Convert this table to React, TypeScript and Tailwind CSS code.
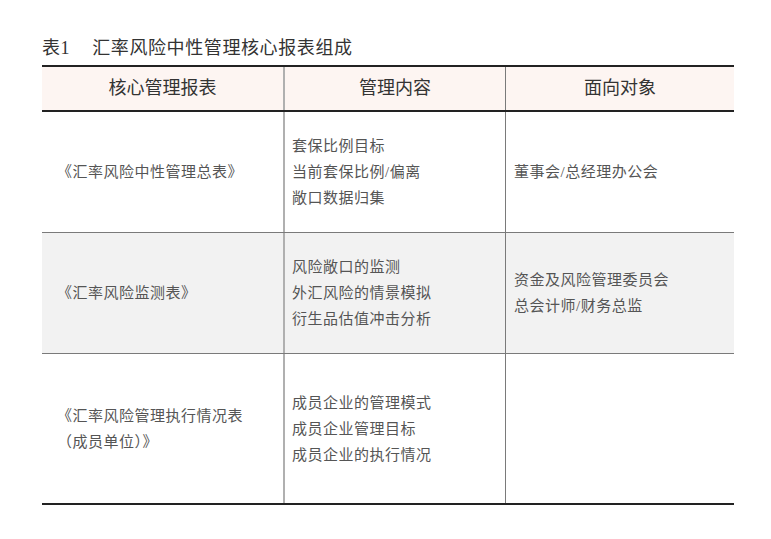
const font = { fontFamily: '"Liberation Serif", "Noto Sans CJK SC", serif' };

const rows = [
  {
    name: ['《汇率风险中性管理总表》'],
    content: ['套保比例目标', '当前套保比例/偏离', '敞口数据归集'],
    target: ['董事会/总经理办公会'],
    h: 'h-[120px]',
    bg: 'bg-white',
    border: 'border-b border-[#7a7a7a]',
  },
  {
    name: ['《汇率风险监测表》'],
    content: ['风险敞口的监测', '外汇风险的情景模拟', '衍生品估值冲击分析'],
    target: ['资金及风险管理委员会', '总会计师/财务总监'],
    h: 'h-[120px]',
    bg: 'bg-[#f2f2f2]',
    border: 'border-b border-[#7a7a7a]',
  },
  {
    name: ['《汇率风险管理执行情况表', '（成员单位）》'],
    content: ['成员企业的管理模式', '成员企业管理目标', '成员企业的执行情况'],
    target: [],
    h: 'h-[149px]',
    bg: 'bg-white',
    border: 'border-b-2 border-[#222]',
  },
];

function Lines({ lines }: { lines: string[] }) {
  return (
    <div className="flex flex-col">
      {lines.map((l) => (
        <div key={l} className="whitespace-nowrap">
          {l}
        </div>
      ))}
    </div>
  );
}

export default function App() {
  return (
    <div className="min-h-[539px] w-[771px] bg-white" style={font}>
      <div className="ml-[42px] w-[692px] pt-[35px]">
        <div className="text-[18px] leading-[26px] tracking-[0.6px] text-[#333]">
          表1<span className="inline-block w-[22px]" />汇率风险中性管理核心报表组成
        </div>

        <div className="mt-[4px] border-t-2 border-[#222]">
          {/* header */}
          <div className="flex h-[45px] border-b-2 border-[#222] bg-[#fdf5f2] text-[18px] text-[#333]">
            <div className="flex w-[243px] items-center justify-center border-r-2 border-[#b0b0b0]">
              核心管理报表
            </div>
            <div className="flex w-[221px] items-center justify-center border-r border-[#7a7a7a]">
              管理内容
            </div>
            <div className="flex flex-1 items-center justify-center">面向对象</div>
          </div>

          {rows.map((r, i) => (
            <div
              key={i}
              className={`flex text-[15px] leading-[26px] tracking-[0.5px] text-[#555] ${r.bg} ${r.border}`}
            >
              <div
                className={`flex w-[243px] items-center border-r-2 border-[#b0b0b0] pl-[15px] ${r.h}`}
              >
                <Lines lines={r.name} />
              </div>
              <div
                className={`flex w-[221px] items-center border-r border-[#7a7a7a] pl-[7px] ${r.h}`}
              >
                <Lines lines={r.content} />
              </div>
              <div className={`flex flex-1 items-center pl-[8px] ${r.h}`}>
                <Lines lines={r.target} />
              </div>
            </div>
          ))}
        </div>
      </div>
    </div>
  );
}
